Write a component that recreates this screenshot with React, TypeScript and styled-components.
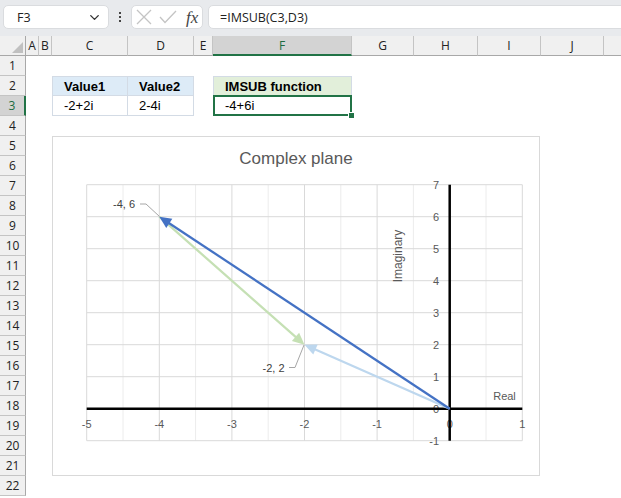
import React from "react";
import styled, { createGlobalStyle } from "styled-components";
import { ChevronDown } from "lucide-react";

const GlobalStyle = createGlobalStyle`
  html, body {
    margin: 0;
    padding: 0;
    background: #fff;
    overflow: hidden;
  }
  body {
    width: 621px;
    height: 498px;
    font-family: "Liberation Sans", Arial, sans-serif;
  }
`;

const Toolbar = styled.div`
  height: 36px;
  box-sizing: border-box;
  background: #e8eaed;
  display: flex;
  align-items: flex-start;
  padding: 5px 0 0 3px;
  overflow: hidden;
`;

const Box = styled.div`
  height: 24px;
  box-sizing: border-box;
  background: #fff;
  border: 1px solid #dadcdf;
  border-radius: 5px;
  display: flex;
  align-items: center;
`;

const NameBox = styled(Box)`
  width: 106px;
  padding: 0 6px 0 13px;
  justify-content: space-between;
  font-family: "Open Sans", "Noto Sans", sans-serif;
  font-size: 12.5px;
  color: #222;
`;

const Dots = styled.div`
  width: 22px;
  height: 24px;
  display: flex;
  flex-direction: column;
  align-items: center;
  justify-content: center;
  gap: 2px;
  span {
    width: 2px;
    height: 2px;
    background: #444;
  }
`;

const FxBox = styled(Box)`
  width: 72px;
  padding: 0 0 0 4px;
  gap: 7px;
`;

const Fx = styled.span`
  font-family: "Liberation Serif", serif;
  font-style: italic;
  font-size: 17px;
  color: #444;
  margin-left: 2px;
  line-height: 1;
`;

const FormulaBox = styled(Box)`
  flex: 1;
  margin-left: 5px;
  margin-right: -10px;
  padding-left: 11px;
  font-family: "Open Sans", "Noto Sans", sans-serif;
  font-size: 12.5px;
  color: #222;
`;

const Sheet = styled.div`
  position: relative;
  display: grid;
  grid-template-columns: 26px 13px 13px 76px 66px 19px 139px 62px 64px 63px 63px 40px;
  grid-auto-rows: 20px;
`;

const Corner = styled.div`
  background: #f0f0f0;
  border-right: 1px solid #a8a8a8;
  border-bottom: 1px solid #a8a8a8;
  box-sizing: border-box;
  position: relative;
  &::after {
    content: "";
    position: absolute;
    right: 2px;
    bottom: 2px;
    border-left: 11px solid transparent;
    border-bottom: 11px solid #c0c0c0;
  }
`;

const ColHead = styled.div<{ $active?: boolean }>`
  box-sizing: border-box;
  background: ${(p) => (p.$active ? "#d3d3d3" : "#f0f0f0")};
  border-right: 1px solid #c4c4c4;
  border-bottom: ${(p) => (p.$active ? "2px solid #217346" : "1px solid #a8a8a8")};
  color: ${(p) => (p.$active ? "#1d6b40" : "#222")};
  font-family: "Open Sans", "Noto Sans", sans-serif;
  font-size: 12px;
  display: flex;
  align-items: center;
  justify-content: center;
  overflow: hidden;
`;

const RowHead = styled.div<{ $active?: boolean }>`
  box-sizing: border-box;
  background: ${(p) => (p.$active ? "#d3d3d3" : "#f0f0f0")};
  border-right: ${(p) => (p.$active ? "2px solid #217346" : "1px solid #a8a8a8")};
  border-bottom: 1px solid #c4c4c4;
  color: ${(p) => (p.$active ? "#1d6b40" : "#222")};
  font-family: "Open Sans", "Noto Sans", sans-serif;
  font-size: 12px;
  display: flex;
  align-items: center;
  justify-content: center;
`;

type Kind = "blank" | "head" | "value" | "fnHead" | "fnValue";

const fills: Record<Kind, string> = {
  blank: "transparent",
  head: "#ddebf7",
  value: "#fff",
  fnHead: "#e2efda",
  fnValue: "#fff",
};

const Cell = styled.div<{ $kind: Kind; $top?: boolean; $left?: boolean }>`
  box-sizing: border-box;
  position: relative;
  background: ${(p) => fills[p.$kind]};
  font-size: 13px;
  font-weight: ${(p) => (p.$kind === "head" || p.$kind === "fnHead" ? 700 : 400)};
  color: #000;
  display: flex;
  align-items: center;
  padding-left: 11px;
  white-space: nowrap;
  ${(p) =>
    p.$kind !== "blank" &&
    `
    border-right: 1px solid #d3dbe5;
    border-bottom: 1px solid #d3dbe5;
    ${p.$top ? "border-top: 1px solid #d3dbe5;" : ""}
    ${p.$left ? "border-left: 1px solid #d3dbe5;" : ""}
  `}
  ${(p) =>
    p.$kind === "fnValue" &&
    `
    &::after {
      content: "";
      position: absolute;
      left: -1px;
      top: -1px;
      right: -1px;
      bottom: -1px;
      border: 2px solid #217346;
    }
    &::before {
      content: "";
      position: absolute;
      right: -4px;
      bottom: -4px;
      width: 5px;
      height: 5px;
      background: #217346;
      border: 1px solid #fff;
      z-index: 2;
    }
  `}
`;

const ChartFrame = styled.div`
  position: absolute;
  left: 52px;
  top: 100px;
  width: 488px;
  height: 340px;
  box-sizing: border-box;
  background: #fff;
  border: 1px solid #d9d9d9;
  svg {
    display: block;
    font-family: "Liberation Sans", Arial, sans-serif;
  }
`;

const columns = [
  { name: "A", w: 13 },
  { name: "B", w: 13 },
  { name: "C", w: 76 },
  { name: "D", w: 66 },
  { name: "E", w: 19 },
  { name: "F", w: 139 },
  { name: "G", w: 62 },
  { name: "H", w: 64 },
  { name: "I", w: 63 },
  { name: "J", w: 63 },
  { name: "", w: 40 },
];

const cells: Record<string, { text: string; kind: Kind; top?: boolean; left?: boolean }> = {
  C2: { text: "Value1", kind: "head", top: true, left: true },
  D2: { text: "Value2", kind: "head", top: true },
  C3: { text: "-2+2i", kind: "value", left: true },
  D3: { text: "2-4i", kind: "value" },
  F2: { text: "IMSUB function", kind: "fnHead", top: true, left: true },
  F3: { text: "-4+6i", kind: "fnValue", left: true },
};

const X = (v: number) => 449.7 + 72.6 * v;
const Y = (v: number) => 408.7 - 32 * v;

const range = (a: number, b: number, step = 1) => {
  const out: number[] = [];
  for (let v = a; v <= b + 1e-9; v += step) out.push(v);
  return out;
};

const Arrow: React.FC<{ from: [number, number]; to: [number, number]; color: string; id: string }> = ({
  from,
  to,
  color,
  id,
}) => {
  const x1 = X(from[0]);
  const y1 = Y(from[1]);
  const x2 = X(to[0]);
  const y2 = Y(to[1]);
  const len = Math.hypot(x2 - x1, y2 - y1);
  const ux = (x2 - x1) / len;
  const uy = (y2 - y1) / len;
  const tipLen = 12;
  const bx = x2 - ux * (tipLen - 2);
  const by = y2 - uy * (tipLen - 2);
  const px = -uy * 5.5;
  const py = ux * 5.5;
  const baseX = x2 - ux * tipLen;
  const baseY = y2 - uy * tipLen;
  return (
    <g id={id}>
      <line x1={x1} y1={y1} x2={bx} y2={by} stroke={color} strokeWidth={2.25} />
      <polygon
        points={`${x2},${y2} ${baseX + px},${baseY + py} ${baseX - px},${baseY - py}`}
        fill={color}
      />
    </g>
  );
};

const Chart: React.FC = () => {
  const axisText = "#595959";
  return (
    <ChartFrame>
      <svg width={486} height={338} viewBox="53 137 486 338">
        <text x={296} y={164} textAnchor="middle" fontSize={17} fill={axisText}>
          Complex plane
        </text>

        {range(-4.5, 0.5).map((v) => (
          <line key={`mv${v}`} x1={X(v)} x2={X(v)} y1={Y(7)} y2={Y(-1)} stroke="#ececec" strokeWidth={1} />
        ))}
        {range(-5, 1).map((v) => (
          <line key={`v${v}`} x1={X(v)} x2={X(v)} y1={Y(7)} y2={Y(-1)} stroke="#d9d9d9" strokeWidth={1} />
        ))}
        {range(-1, 7).map((v) => (
          <line key={`h${v}`} x1={X(-5)} x2={X(1)} y1={Y(v)} y2={Y(v)} stroke="#d9d9d9" strokeWidth={1} />
        ))}

        {range(-5, 1).map((v) => (
          <text key={`xl${v}`} x={X(v)} y={428} textAnchor="middle" fontSize={11} fill={axisText}>
            {v}
          </text>
        ))}
        {range(-1, 7).map((v) => (
          <text key={`yl${v}`} x={439} y={Y(v) + 4} textAnchor="end" fontSize={11} fill={axisText}>
            {v}
          </text>
        ))}

        <line x1={X(-5)} x2={X(1)} y1={Y(0)} y2={Y(0)} stroke="#000" strokeWidth={2.5} />
        <line x1={X(0)} x2={X(0)} y1={Y(7)} y2={Y(-1)} stroke="#000" strokeWidth={2.5} />

        <text x={504.5} y={400} textAnchor="middle" fontSize={11} fill={axisText}>
          Real
        </text>
        <text
          x={0}
          y={0}
          textAnchor="middle"
          fontSize={12}
          fill={axisText}
          transform={`translate(402 256) rotate(-90)`}
        >
          Imaginary
        </text>

        <Arrow id="diff" from={[-4, 6]} to={[-2, 2]} color="#c5e0b4" />
        <Arrow id="v1" from={[0, 0]} to={[-2, 2]} color="#bdd7ee" />
        <Arrow id="res" from={[0, 0]} to={[-4, 6]} color="#4472c4" />

        <polyline points="140,204 146,204 159.5,216.5" fill="none" stroke="#a6a6a6" strokeWidth={1} />
        <text x={135} y={208} textAnchor="end" fontSize={11} fill="#404040">
          -4, 6
        </text>
        <polyline points="289,367.5 295,367.5 304,345" fill="none" stroke="#a6a6a6" strokeWidth={1} />
        <text x={284.5} y={371.5} textAnchor="end" fontSize={11} fill="#404040">
          -2, 2
        </text>
      </svg>
    </ChartFrame>
  );
};

const App: React.FC = () => {
  const rows = range(1, 22);
  return (
    <>
      <GlobalStyle />
      <Toolbar>
        <NameBox>
          <span>F3</span>
          <ChevronDown size={15} strokeWidth={2.2} color="#333" />
        </NameBox>
        <Dots>
          <span />
          <span />
          <span />
        </Dots>
        <FxBox>
          <svg width={16} height={16} viewBox="0 0 16 16">
            <path d="M1 1 L15 15 M15 1 L1 15" stroke="#c4c4c4" strokeWidth={1.3} fill="none" />
          </svg>
          <svg width={18} height={14} viewBox="0 0 18 14">
            <path d="M1 7 L6 12.5 L17 1" stroke="#c4c4c4" strokeWidth={1.3} fill="none" />
          </svg>
          <Fx>fx</Fx>
        </FxBox>
        <FormulaBox>=IMSUB(C3,D3)</FormulaBox>
      </Toolbar>
      <Sheet>
        <Corner />
        {columns.map((c, i) => (
          <ColHead key={`ch${i}`} $active={c.name === "F"}>
            {c.name}
          </ColHead>
        ))}
        {rows.map((r) => (
          <React.Fragment key={`r${r}`}>
            <RowHead $active={r === 3}>{r}</RowHead>
            {columns.map((c, i) => {
              const data = cells[`${c.name}${r}`];
              return (
                <Cell key={`c${r}-${i}`} $kind={data ? data.kind : "blank"} $top={data?.top} $left={data?.left}>
                  {data?.text}
                </Cell>
              );
            })}
          </React.Fragment>
        ))}
        <Chart />
      </Sheet>
    </>
  );
};

export default App;
